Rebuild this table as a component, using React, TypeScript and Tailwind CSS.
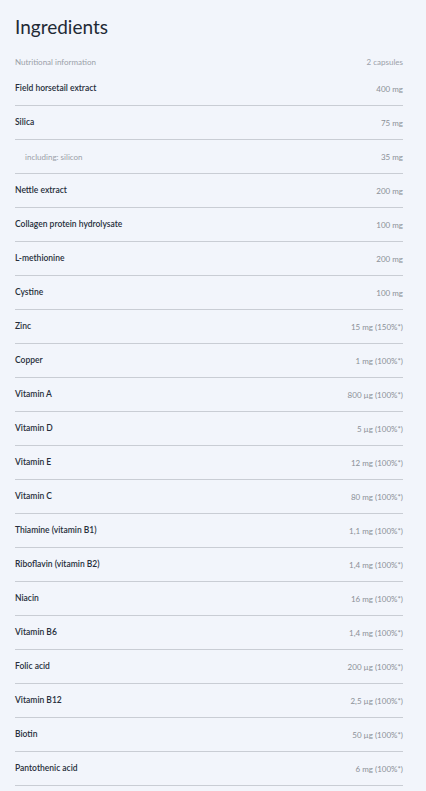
const rows: { name: string; value: string; sub?: boolean }[] = [
  { name: "Field horsetail extract", value: "400 mg" },
  { name: "Silica", value: "75 mg" },
  { name: "including: silicon", value: "35 mg", sub: true },
  { name: "Nettle extract", value: "200 mg" },
  { name: "Collagen protein hydrolysate", value: "100 mg" },
  { name: "L-methionine", value: "200 mg" },
  { name: "Cystine", value: "100 mg" },
  { name: "Zinc", value: "15 mg (150%*)" },
  { name: "Copper", value: "1 mg (100%*)" },
  { name: "Vitamin A", value: "800 µg (100%*)" },
  { name: "Vitamin D", value: "5 µg (100%*)" },
  { name: "Vitamin E", value: "12 mg (100%*)" },
  { name: "Vitamin C", value: "80 mg (100%*)" },
  { name: "Thiamine (vitamin B1)", value: "1,1 mg (100%*)" },
  { name: "Riboflavin (vitamin B2)", value: "1,4 mg (100%*)" },
  { name: "Niacin", value: "16 mg (100%*)" },
  { name: "Vitamin B6", value: "1,4 mg (100%*)" },
  { name: "Folic acid", value: "200 µg (100%*)" },
  { name: "Vitamin B12", value: "2,5 µg (100%*)" },
  { name: "Biotin", value: "50 µg (100%*)" },
  { name: "Pantothenic acid", value: "6 mg (100%*)" },
];

export default function App() {
  return (
    <div className="min-h-[791px] bg-[#f2f5fb] pl-[15px] pr-[23px] pt-[14px] font-['Lato','Noto_Sans',sans-serif]">
      <h2 className="text-[19px] leading-[26px] font-normal text-[#1f2a35]">
        Ingredients
      </h2>

      <div className="mt-[12px] h-[20px] flex items-center justify-between text-[8px] text-[#9aa0a8]">
        <span>Nutritional information</span>
        <span>2 capsules</span>
      </div>

      <div>
        {rows.map((row) => (
          <div
            key={row.name}
            className="h-[34px] flex items-center justify-between border-b border-[#c9cdd4]"
          >
            {row.sub ? (
              <span className="pl-[10px] text-[8px] text-[#9aa0a8]">
                {row.name}
              </span>
            ) : (
              <span className="text-[8.5px] font-semibold text-[#262e3a]">
                {row.name}
              </span>
            )}
            <span className="text-[8px] text-[#8b9097]">{row.value}</span>
          </div>
        ))}
      </div>
    </div>
  );
}
